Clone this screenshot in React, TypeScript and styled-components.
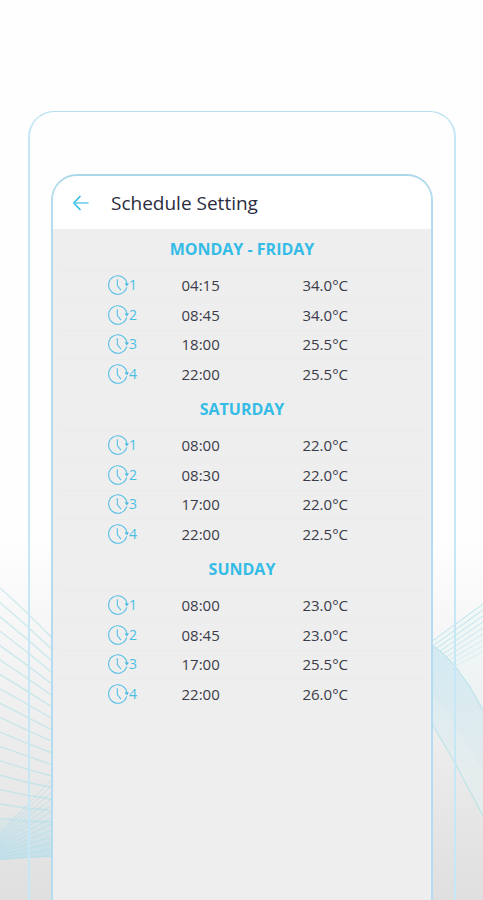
import React from "react";
import styled, { createGlobalStyle } from "styled-components";

const GlobalStyle = createGlobalStyle`
  *, *::before, *::after { box-sizing: border-box; }
  body {
    margin: 0;
    font-family: "Open Sans", "Noto Sans", sans-serif;
    background: #fefefe;
  }
`;

const Page = styled.div`
  position: relative;
  display: flex;
  min-height: 100vh;
  padding: 111px 27px 0 28px;
  overflow: hidden;
  background: linear-gradient(#fefefe 0, #fefefe 540px, #eeeeee 720px, #dfdfdf 900px);
`;

const Waves = styled.svg<{ $side: "left" | "right" }>`
  position: absolute;
  top: 580px;
  ${(p) => p.$side}: 0;
  width: 52px;
  height: 300px;
  fill: none;
`;

const Bezel = styled.div`
  position: relative;
  display: flex;
  flex: 1;
  padding: 62px 21px 0;
  border: 2px solid #c6e7f6;
  border-top: 1px solid #b5def0;
  border-bottom: 0;
  border-radius: 26px 26px 0 0;
`;

const Screen = styled.main`
  flex: 1;
  overflow: hidden;
  background: #eeeeee;
  border: 2px solid #b4dcee;
  border-top-color: #a9d8ea;
  border-bottom: 0;
  border-radius: 26px 26px 0 0;
`;

const Header = styled.header`
  display: flex;
  align-items: center;
  gap: 20px;
  height: 53px;
  padding: 0 18px;
  background: #ffffff;
`;

const BackButton = styled.button`
  display: flex;
  padding: 0;
  border: 0;
  background: none;
  color: #2fbbe3;
  cursor: pointer;
`;

const Title = styled.h1`
  margin: 0;
  font-size: 19px;
  font-weight: 400;
  line-height: 28px;
  color: #2b2c3e;
`;

const Schedule = styled.table`
  width: 100%;
  border-collapse: collapse;
  table-layout: fixed;
  color: #3b3c49;
  font-size: 15px;
  line-height: 20px;
`;

const Day = styled.caption`
  height: 41px;
  color: #35bce6;
  font-size: 16px;
  font-weight: 700;
  line-height: 41px;
`;

const Slots = styled.tbody`
  height: 119px;
`;

const Slot = styled.tr`
  background: linear-gradient(#ebebeb, #ebebeb) center top / 98% 1px no-repeat;
`;

const SlotName = styled.th`
  width: 34%;
  padding: 0 0 0 55px;
  color: #4bbfe3;
  font-size: 14px;
  font-weight: 400;
`;

const SlotLabel = styled.span`
  display: flex;
  align-items: center;
`;

const Value = styled.td<{ $width: string }>`
  width: ${(p) => p.$width};
  padding: 0;
`;

type Entry = [time: string, temperature: string];

const days: { name: string; entries: Entry[] }[] = [
  {
    name: "MONDAY - FRIDAY",
    entries: [["04:15", "34.0"], ["08:45", "34.0"], ["18:00", "25.5"], ["22:00", "25.5"]],
  },
  {
    name: "SATURDAY",
    entries: [["08:00", "22.0"], ["08:30", "22.0"], ["17:00", "22.0"], ["22:00", "22.5"]],
  },
  {
    name: "SUNDAY",
    entries: [["08:00", "23.0"], ["08:45", "23.0"], ["17:00", "25.5"], ["22:00", "26.0"]],
  },
];

const range = (n: number) => Array.from({ length: n }, (_, i) => i);

function ClockIcon() {
  return (
    <svg width="21" height="20" viewBox="0 0 21 20" fill="none" stroke="#55bfe4" strokeWidth="1.1" aria-hidden="true">
      <path d="M18.8 8A9.2 9.2 0 1 0 18.7 12.4" />
      <path d="M9.3 4.3V10.6L13 15.2" />
      <path d="M16.6 8.2H21L18.9 11.6Z" fill="#45b9e2" stroke="none" />
    </svg>
  );
}

function BackIcon() {
  return (
    <svg width="20" height="20" viewBox="0 0 20 20" fill="none" stroke="currentColor" strokeWidth="1.5" aria-hidden="true">
      <path d="M9.5 3L2.8 10L9.5 17" />
      <path d="M3 10H17.5" stroke="#62cbea" />
    </svg>
  );
}

function LeftWaves() {
  return (
    <Waves $side="left" viewBox="0 0 52 300" aria-hidden="true">
      <defs>
        <linearGradient id="leftHaze" x1="0" y1="0" x2="0" y2="1">
          <stop offset="0" stopColor="#c4e4ed" stopOpacity="0" />
          <stop offset="1" stopColor="#c1e0ea" stopOpacity="0.9" />
        </linearGradient>
      </defs>
      <path d="M0 240L52 220V277Q26 277 0 280Z" fill="url(#leftHaze)" />
      <g stroke="#b4e3e8" strokeWidth="1.3" opacity="0.65">
        {range(17).map((i) => (
          <path key={i} d={`M0 ${8 + i * 14.4}Q26 ${31 + i * 13.2} 52 ${58 + i * 11.5}`} />
        ))}
      </g>
      <g stroke="#a5dbe8" strokeWidth="0.9" opacity="0.5">
        {range(13).map((i) => (
          <path key={i} d={`M0 ${253 + i * 2.2}L52 ${199 + i * 6.4}`} />
        ))}
      </g>
    </Waves>
  );
}

function RightWaves() {
  return (
    <Waves $side="right" viewBox="0 0 52 300" aria-hidden="true">
      <defs>
        <linearGradient id="rightHaze" gradientUnits="userSpaceOnUse" x1="8" y1="70" x2="30" y2="200">
          <stop offset="0" stopColor="#cfe9f3" stopOpacity="0.8" />
          <stop offset="1" stopColor="#e3eeef" stopOpacity="0.6" />
        </linearGradient>
      </defs>
      <path d="M0 64L52 25V130L24 86Z" fill="#e9f6f8" opacity="0.4" />
      <path d="M0 64Q12 72 24 86Q40 106 52 130V236L24 183L0 142Z" fill="url(#rightHaze)" />
      <g stroke="#a4dce7" strokeWidth="1">
        {range(9).map((i) => (
          <path key={i} d={`M${i * 3} ${62 + i * 3}L52 ${24 + i * 6}`} opacity={0.8 - i * 0.07} />
        ))}
      </g>
      <g stroke="#b3dde9" strokeWidth="0.7" opacity="0.35">
        {range(12).map((i) => (
          <path key={i} d={`M0 ${66 + i * 4}Q24 ${88 + i * 5} 52 ${132 + i * 5}`} />
        ))}
      </g>
      <path d="M0 64Q12 72 24 86Q40 106 52 130" stroke="#b1e0e8" />
      <path d="M0 142L24 183L52 236" stroke="#b1e2e4" />
    </Waves>
  );
}

export default function App() {
  return (
    <>
      <GlobalStyle />
      <Page>
        <LeftWaves />
        <RightWaves />
        <Bezel>
          <Screen>
            <Header>
              <BackButton type="button" aria-label="Back">
                <BackIcon />
              </BackButton>
              <Title>Schedule Setting</Title>
            </Header>
            {days.map((day) => (
              <Schedule key={day.name}>
                <Day>{day.name}</Day>
                <Slots>
                  {day.entries.map(([time, temperature], i) => (
                    <Slot key={time}>
                      <SlotName scope="row">
                        <SlotLabel>
                          <ClockIcon />
                          {i + 1}
                        </SlotLabel>
                      </SlotName>
                      <Value $width="32%">{time}</Value>
                      <Value $width="34%">{temperature}°C</Value>
                    </Slot>
                  ))}
                </Slots>
              </Schedule>
            ))}
          </Screen>
        </Bezel>
      </Page>
    </>
  );
}
